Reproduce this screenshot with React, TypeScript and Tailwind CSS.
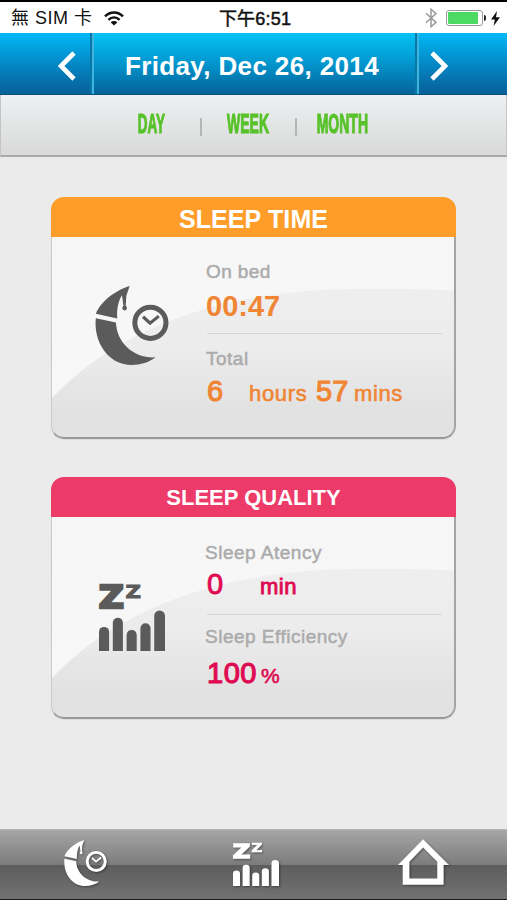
import { clsx } from "clsx";
import * as React from "react";

type IconProps = { className?: string };

function MoonClockIcon({ className }: IconProps) {
  return (
    <svg viewBox="32 34 220 236" className={className} fill="currentColor" aria-hidden>
      <path d="M135 34C97 45 50 77 34 117L98 131C96 104 101 79 112 62L117 97L123 97L125 64Z" />
      <circle cx="120" cy="100" r="7" />
      <path d="M34 130C26 205 74 270 140 270C168 270 194 262 212 247C152 251 97 208 94 143Z" />
      <circle cx="197" cy="144" r="46.5" fill="none" stroke="currentColor" strokeWidth="15" />
      <path d="M175 126L196 145L222 124" fill="none" stroke="currentColor" strokeWidth="9.5" />
    </svg>
  );
}

function SleepBarsIcon({ className }: IconProps) {
  return (
    <svg
      viewBox="0 0 196 200"
      preserveAspectRatio="none"
      className={clsx("overflow-visible", className)}
      fill="currentColor"
      fontFamily="DejaVu Sans"
      fontWeight="700"
      stroke="currentColor"
      aria-hidden
    >
      <text x="-1" y="72" fontSize="94" textLength="75" lengthAdjust="spacingAndGlyphs" strokeWidth="7">
        Z
      </text>
      <text x="79" y="42" fontSize="55" textLength="46" lengthAdjust="spacingAndGlyphs" strokeWidth="3">
        Z
      </text>
      <g stroke="none">
        <path d="M0 200V143a15 15 0 0 1 30 0V200Z" />
        <path d="M41 200V116a15 15 0 0 1 30 0V200Z" />
        <path d="M82 200V152a15 15 0 0 1 30 0V200Z" />
        <path d="M123 200V132a15 15 0 0 1 30 0V200Z" />
        <path d="M164 200V95a16 16 0 0 1 32 0V200Z" />
      </g>
    </svg>
  );
}

function HomeIcon({ className }: IconProps) {
  return (
    <svg viewBox="436 73 152 136" className={className} fill="currentColor" fillRule="evenodd" aria-hidden>
      <path d="M511 73L588 150H572V209H450V150H436ZM511 98L470 140V190H553V140Z" />
    </svg>
  );
}

function Chevron({ className, d }: IconProps & { d: string }) {
  return (
    <svg viewBox="0 0 18 30" className={className} fill="none" stroke="currentColor" strokeWidth="4.6" aria-hidden>
      <path d={d} />
    </svg>
  );
}

function StatusBar() {
  return (
    <div className="flex h-[33px] items-center border-t-2 border-black bg-white pt-px text-[#111]">
      <div className="flex w-[200px] items-center pl-[11px]">
        <span className="w-[83px] whitespace-nowrap text-[18px] leading-6 tracking-[0.5px]">無 SIM 卡</span>
        <svg viewBox="0 0 20 15" className="ml-[10px] h-[15px] w-5" fill="none" stroke="currentColor" strokeWidth="2.4" aria-hidden>
          <path d="M1 5.4C6 0.2 14 0.2 19 5.4" />
          <path d="M4.4 8.8C7.6 5.6 12.4 5.6 15.6 8.8" />
          <path d="M10 14.6L6.6 11.2C8.6 9.5 11.4 9.5 13.4 11.2Z" fill="currentColor" stroke="none" />
        </svg>
      </div>
      <div className="flex w-[110px] justify-center whitespace-nowrap pt-px text-[18px] leading-6 tracking-[0.2px] [-webkit-text-stroke:0.5px]">
        下午6:51
      </div>
      <div className="flex flex-1 items-center justify-end pr-[7px]">
        <svg viewBox="0 0 12 20" className="mr-[9px] h-5 w-3" fill="none" stroke="#9b9b9b" strokeWidth="1.5" aria-hidden>
          <path d="M1 5.3L11 14.4L6 18.8V1.2L11 5.6L1 14.7" />
        </svg>
        <div className="h-[16px] w-[37px] rounded-[3px] border border-[#999] p-px">
          <div className="h-full w-[30px] rounded-[1px] bg-[#4cd964]" />
        </div>
        <div className="ml-px h-[6px] w-[2px] rounded-r bg-[#222]" />
        <svg viewBox="0 0 9 15" className="ml-[5px] h-[15px] w-[9px]" fill="currentColor" aria-hidden>
          <path d="M6 0L0 8.4H3.8L2.6 15L9 6.2H5Z" />
        </svg>
      </div>
    </div>
  );
}

function DateBar() {
  return (
    <div className="flex h-[62px] border-b border-[#07507c] bg-gradient-to-b from-[#06c3f6] via-[#0395cd] to-[#046399] text-white">
      <button
        type="button"
        aria-label="Previous day"
        className="flex w-[92px] items-center justify-end border-r-2 border-[#0878ab] bg-gradient-to-b from-[#02b9f8] via-[#0489c6] to-[#075f98] pr-[14px] pt-1"
      >
        <Chevron className="h-[30px] w-[18px]" d="M16 2L3 15L16 28" />
      </button>
      <div className="flex flex-1 items-center justify-center whitespace-nowrap border-l-2 border-[#3eb4dd] pr-[5px] pt-[5px] text-[26px] font-bold tracking-[0.37px]">
        Friday, Dec 26, 2014
      </div>
      <button
        type="button"
        aria-label="Next day"
        className="flex w-[92px] items-center border-l-2 border-[#0878ab] bg-gradient-to-b from-[#02b9f8] via-[#0489c6] to-[#075f98] pt-1 shadow-[inset_2px_0_0_#3eb4dd]"
      >
        <Chevron className="ml-[13px] h-[30px] w-[18px]" d="M2 2L15 15L2 28" />
      </button>
    </div>
  );
}

function Tab({ label, className, scale }: { label: string; className: string; scale: string }) {
  return (
    <button type="button" className={clsx("mb-[2px] flex h-8 items-center justify-center", className)}>
      <span
        className={clsx(
          "whitespace-nowrap text-[28px] font-bold leading-8 text-[#57c229] [-webkit-text-stroke:1.2px]",
          scale,
        )}
      >
        {label}
      </span>
    </button>
  );
}

function RangeTabs() {
  return (
    <div className="flex h-[62px] items-center border-x border-b-2 border-x-[#c4c4c4] border-b-[#a9a9a9] bg-gradient-to-b from-[#edf1f2] to-[#d9d9d9] pl-[136px]">
      <Tab label="DAY" className="w-[29px]" scale="scale-x-[0.48]" />
      <span className="ml-[34px] mt-1 h-[18px] w-[2px] bg-[#b4b6b7]" />
      <Tab label="WEEK" className="ml-[24px] w-[43px]" scale="scale-x-[0.5]" />
      <span className="ml-[26px] mt-1 h-[18px] w-[2px] bg-[#b4b6b7]" />
      <Tab label="MONTH" className="ml-[19px] w-[52px]" scale="scale-x-[0.5]" />
    </div>
  );
}

function Card({
  title,
  titleClass,
  icon,
  children,
}: {
  title: string;
  titleClass: string;
  icon: React.ReactNode;
  children: React.ReactNode;
}) {
  return (
    <section className="relative isolate h-[242px] w-[405px] overflow-hidden rounded-[13px] bg-gradient-to-b from-[#f6f6f6] to-[#f8f8f8] shadow-[0_1px_1px_#dcdcdc]">
      {/* glossy sweep behind the content */}
      <svg viewBox="0 0 405 242" className="absolute inset-0 -z-10 h-full w-full" aria-hidden>
        <defs>
          <linearGradient id="sweep" x1="0" y1="0" x2="0" y2="1">
            <stop offset="0" stopColor="#eeeeee" />
            <stop offset="0.4" stopColor="#ececec" />
            <stop offset="0.8" stopColor="#e2e2e2" />
            <stop offset="1" stopColor="#e2e2e2" />
          </linearGradient>
        </defs>
        <path d="M0 202C60 138 160 92 310 92C345 92 380 92 405 94V242H0Z" fill="url(#sweep)" />
      </svg>
      <div className="pointer-events-none absolute inset-0 rounded-[13px] border-b-[2.5px] border-l border-r-2 border-b-[#999] border-l-[#c9c9c9] border-r-[#a4a4a4]" />
      <h2 className={clsx("relative flex items-center justify-center font-bold text-white", titleClass)}>{title}</h2>
      <div className="flex">
        <div className="w-[156px] shrink-0">{icon}</div>
        <div className="w-[235px]">{children}</div>
      </div>
    </section>
  );
}

const labelClass = "whitespace-nowrap text-[19px] leading-[26px] text-[#ababab] [-webkit-text-stroke:0.5px]";

function SleepTimeCard() {
  return (
    <Card
      title="SLEEP TIME"
      titleClass="h-10 bg-[#fe9d29] pt-[6px] text-[25px] tracking-[0.1px]"
      icon={<MoonClockIcon className="ml-[44px] mt-[49px] h-[79px] w-[74px] text-[#5b5b5b]" />}
    >
      <p className={clsx("-ml-px mt-[22px] tracking-[0.4px]", labelClass)}>On bed</p>
      <p className="-ml-px mt-[6px] h-[30px] text-[29px] font-bold leading-[30px] text-[#f08534]">00:47</p>
      <hr className="mt-3 border-t-[1.5px] border-[#d5d5d5]" />
      <p className={clsx("-ml-px mt-[12px] tracking-[0.5px]", labelClass)}>Total</p>
      <p className="mt-[4px] flex h-[30px] items-baseline text-[29px] leading-[30px] text-[#f08534] [-webkit-text-stroke:0.6px]">
        <span className="w-[42px] [-webkit-text-stroke:1.1px]">6</span>
        <span className="w-[67px] text-[22px] tracking-[0.7px]">hours</span>
        <span className="w-[38px] [-webkit-text-stroke:1.1px]">57</span>
        <span className="text-[22px] tracking-[0.6px]">mins</span>
      </p>
    </Card>
  );
}

function SleepQualityCard() {
  return (
    <Card
      title="SLEEP QUALITY"
      titleClass="h-10 bg-[#ec3a69] pt-px text-[22px]"
      icon={<SleepBarsIcon className="ml-[48px] mt-[67px] h-[67px] w-[66px] text-[#5b5b5b]" />}
    >
      <p className={clsx("-ml-[2px] mt-[23px] tracking-[0.5px]", labelClass)}>Sleep Atency</p>
      <p className="mt-[3px] flex h-[30px] items-baseline text-[29px] leading-[30px] text-[#df0a52] [-webkit-text-stroke:0.9px]">
        <span className="w-[53px]">0</span>
        <span className="text-[22px] tracking-[0.5px]">min</span>
      </p>
      <hr className="mt-[15px] border-t-[1.5px] border-[#d5d5d5]" />
      <p className={clsx("-ml-[2px] mt-[9px] tracking-[0.5px]", labelClass)}>Sleep Efficiency</p>
      <p className="mt-[8px] flex h-[30px] items-baseline text-[29px] leading-[30px] text-[#df0a52] [-webkit-text-stroke:0.6px]">
        <span className="w-[54px] tracking-[0.5px] [-webkit-text-stroke:1.2px]">100</span>
        <span className="text-[21px]">%</span>
      </p>
    </Card>
  );
}

function BottomNav() {
  return (
    <nav className="flex h-[71px] items-center border-b border-t border-b-[#1c1a1b] border-t-[#b5b5b5] bg-[linear-gradient(#a6a6a6,#7c7c7c_50%,#5d5d5d_51%,#727272)] text-white">
      <button type="button" aria-label="Sleep time" className="mb-[3px] w-[169px] pl-[64px]">
        <MoonClockIcon className="h-[46px] w-[43px] drop-shadow-[1px_1px_1px_rgba(0,0,0,0.4)]" />
      </button>
      <button type="button" aria-label="Sleep quality" className="mb-px w-[169px] pl-[64px]">
        <SleepBarsIcon className="h-[43px] w-[46px] drop-shadow-[1px_1px_1px_rgba(0,0,0,0.4)]" />
      </button>
      <button type="button" aria-label="Home" className="mb-[5px] flex-1 pl-[60px]">
        <HomeIcon className="h-[46px] w-[51px] drop-shadow-[1px_1px_1px_rgba(0,0,0,0.4)]" />
      </button>
    </nav>
  );
}

export default function App() {
  return (
    <div className="flex h-[900px] w-[507px] flex-col overflow-hidden bg-[#ebebeb] font-['Liberation_Sans','Noto_Sans_CJK_TC',sans-serif]">
      <StatusBar />
      <DateBar />
      <RangeTabs />
      <main className="flex flex-1 flex-col gap-[38px] pl-[51px] pt-[40px]">
        <SleepTimeCard />
        <SleepQualityCard />
      </main>
      <BottomNav />
    </div>
  );
}
